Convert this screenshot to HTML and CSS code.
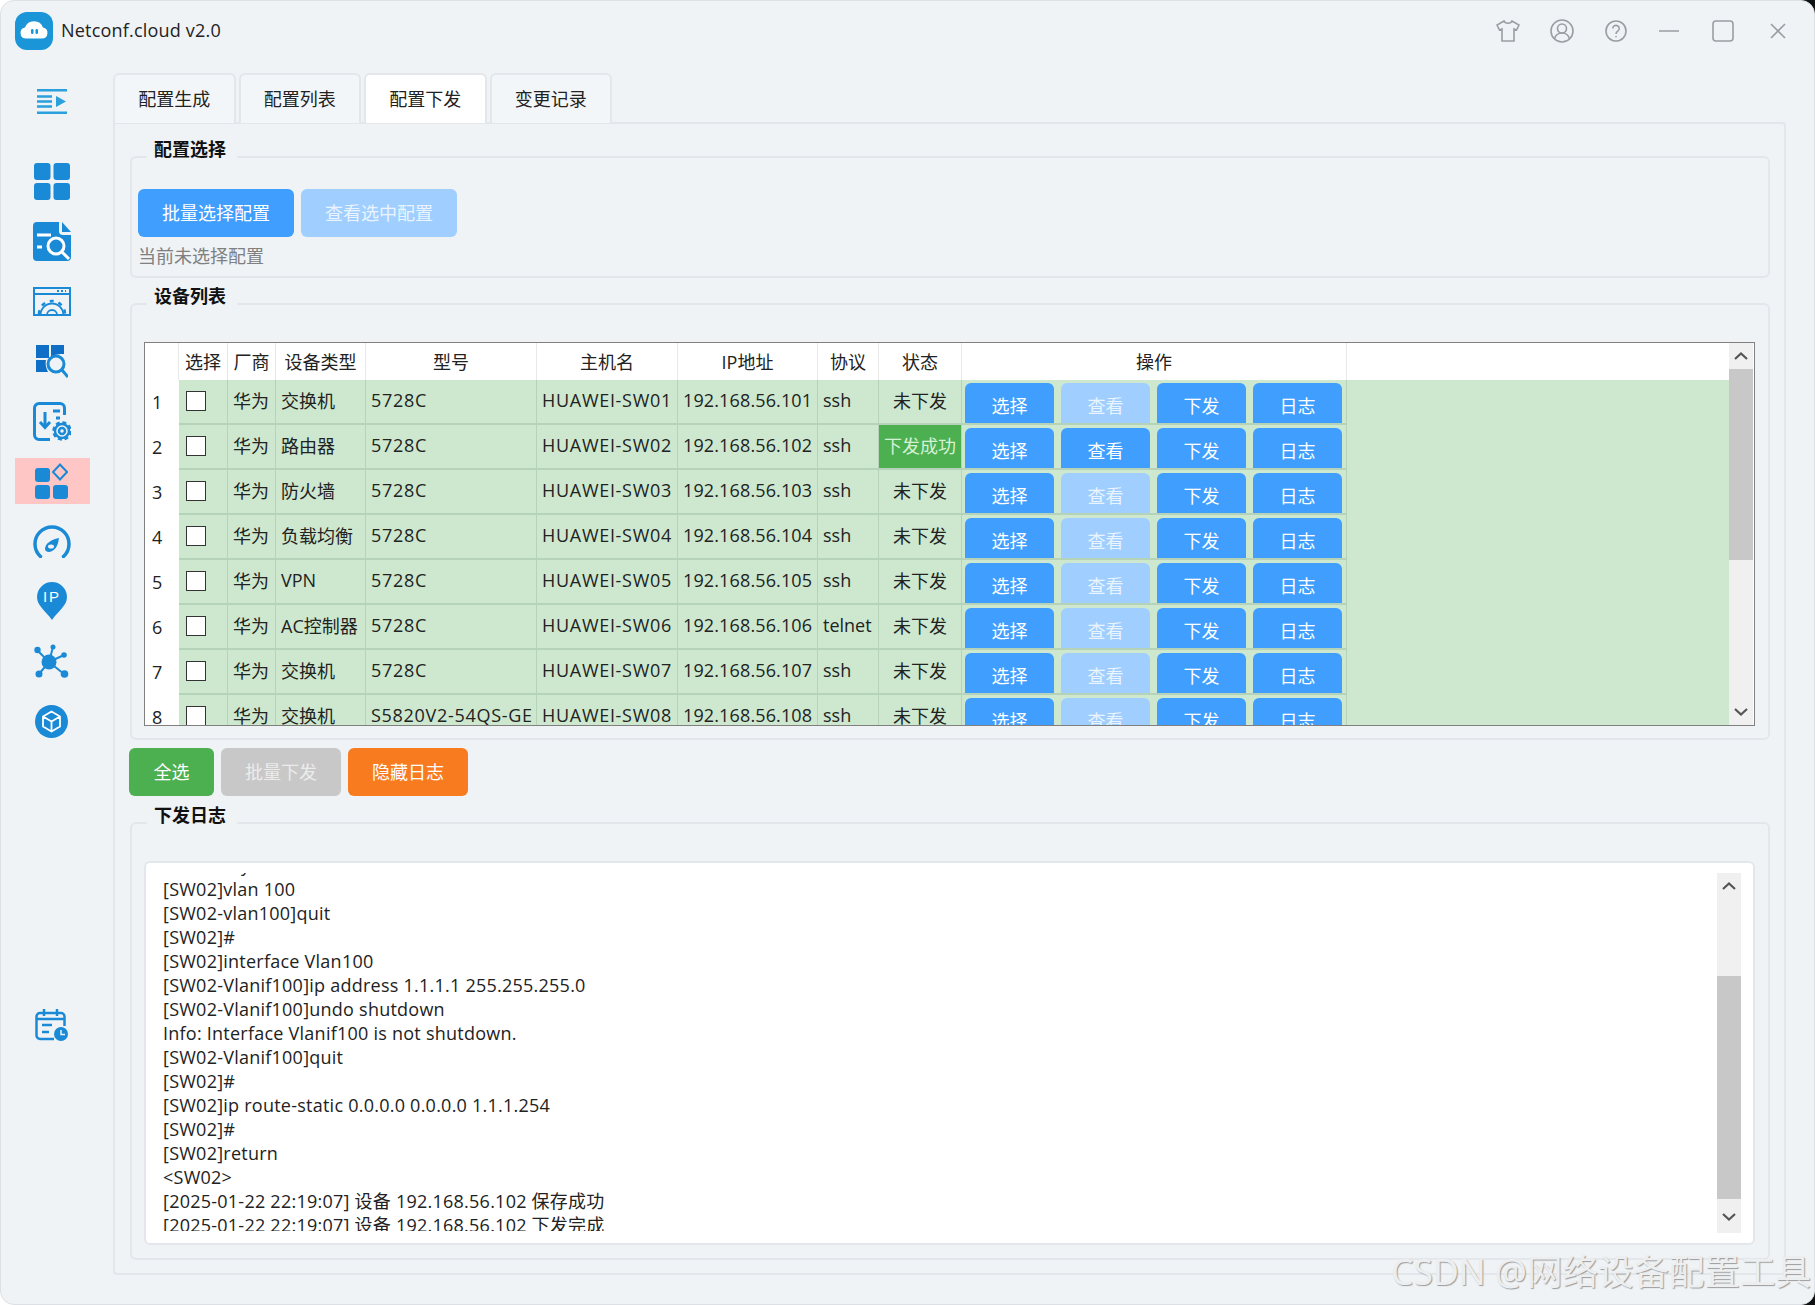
FILE: index.html
```html
<!DOCTYPE html>
<html lang="zh-CN">
<head>
<meta charset="utf-8">
<title>Netconf.cloud v2.0</title>
<link rel="stylesheet" href="styles.css">
</head>
<body>
<div class="window">
  <header class="titlebar">
    <div class="brand">
      <span class="logo">
        <svg width="38" height="38" viewBox="0 0 38 38"><rect width="38" height="38" rx="12" fill="#1a96d8"/><path d="M11 26.500a5.500 5.500 0 0 1-1-10.900a9.500 9.500 0 0 1 18 0a5.500 5.500 0 0 1-1 10.900z" fill="#fff"/><rect x="16" y="17" width="2.500" height="5" rx="1.200" fill="#1a96d8"/><rect x="20.500" y="17" width="2.500" height="5" rx="1.200" fill="#1a96d8"/></svg>
      </span>
      <span class="brand-name">Netconf.cloud v2.0</span>
    </div>
    <div class="win-tools">
      <svg class="wt wt-shirt" width="24" height="22" viewBox="0 0 24 22"><path d="M8 1L1 5l2.500 5L6 9v12h12V9l2.500 1L23 5l-7-4c-1 3-7 3-8 0z"/></svg>
      <svg class="wt wt-user" width="24" height="24" viewBox="0 0 24 24"><circle cx="12" cy="12" r="11"/><circle cx="12" cy="9.500" r="4.500"/><path d="M4.500 20c1-4 4-6 7.500-6s6.500 2 7.500 6"/></svg>
      <svg class="wt wt-help" width="22" height="22" viewBox="0 0 22 22"><circle cx="11" cy="11" r="10"/><path d="M7.800 8.500a3.200 3.200 0 1 1 5 2.700c-1.200.8-1.800 1.300-1.800 2.800"/><path d="M11 16v1.200"/></svg>
      <svg class="wt wt-min" width="20" height="4" viewBox="0 0 20 4"><path d="M0 2H20"/></svg>
      <svg class="wt wt-max" width="22" height="22" viewBox="0 0 22 22"><rect x="1" y="1" width="20" height="20" rx="3"/></svg>
      <svg class="wt wt-close" width="16" height="16" viewBox="0 0 16 16"><path d="M1 1L15 15M15 1L1 15"/></svg>
    </div>
  </header>

  <div class="body">
    <nav class="sidebar">
      <div class="nav-item nav-toggle">
        <svg width="30" height="25" viewBox="0 0 30 25"><path d="M0 1.200H30M0 7.500H15M0 12.500H15M0 17.500H15M0 23.800H30" stroke="#2aa0dc" stroke-width="2.400" fill="none"/><path d="M19 7L29 12.500L19 18z" fill="#2aa0dc"/></svg>
      </div>
      <div class="nav-list">
        <div class="nav-item">
          <svg width="36" height="37" viewBox="0 0 36 37" fill="#1b8ad6"><rect width="16.500" height="17" rx="3"/><rect x="19.500" width="16.500" height="17" rx="3"/><rect y="20" width="16.500" height="17" rx="3"/><rect x="19.500" y="20" width="16.500" height="17" rx="3"/></svg>
        </div>
        <div class="nav-item">
          <svg width="38" height="39" viewBox="0 0 38 39"><path d="M4 0H26V9a4 4 0 0 0 4 4H38V35a4 4 0 0 1-4 4H4a4 4 0 0 1-4-4V4a4 4 0 0 1 4-4z" fill="#1b8ad6"/><path d="M29 0L38 10H29z" fill="#1b8ad6"/><path d="M4 13H18M4 25H9" stroke="#fff" stroke-width="3"/><circle cx="23" cy="24" r="8" fill="none" stroke="#fff" stroke-width="3"/><path d="M29 30L36 37" stroke="#fff" stroke-width="3"/></svg>
        </div>
        <div class="nav-item">
          <svg width="38" height="29" viewBox="0 0 38 29" fill="none" stroke="#1b8ad6"><rect x="1" y="1" width="36" height="27" stroke-width="2"/><path d="M1 7H37" stroke-width="2"/><path d="M24 4H33" stroke-width="2" stroke-dasharray="2 2"/><path d="M7.500 28a11.500 11.500 0 0 1 23 0" stroke-width="1.800"/><path d="M6 27a13 13 0 0 1 26 0" stroke-width="2.500" stroke-dasharray="4 5"/><path d="M14 28a5 5 0 0 1 10 0" stroke-width="1.800"/></svg>
        </div>
        <div class="nav-item">
          <svg width="32" height="33" viewBox="0 0 32 33"><path d="M0 0H13V13H0zM15 0H28V9C24 9 19 9 15 12z" fill="#0f6fc6"/><path d="M0 15H10C9 19 10 23 12 27H0z" fill="#0f6fc6"/><circle cx="20" cy="19" r="8" fill="none" stroke="#1b8ad6" stroke-width="3"/><path d="M26 25L32 32" stroke="#1b8ad6" stroke-width="3"/></svg>
        </div>
        <div class="nav-item">
          <svg width="38" height="39" viewBox="0 0 38 39" fill="none" stroke="#1b8ad6" stroke-width="3"><path d="M17 37.500H6a4.500 4.500 0 0 1-4.500-4.500V6A4.500 4.500 0 0 1 6 1.500H27a4.500 4.500 0 0 1 4.500 4.500V13"/><path d="M12 10V25M7 20l5 5.500 5-5.500"/><path d="M20 9H27M23 16H27" /><circle cx="29" cy="29" r="3" stroke-width="2.500"/><circle cx="29" cy="29" r="7" stroke-width="2.500"/><circle cx="29" cy="29" r="8.500" stroke-width="2.500" stroke-dasharray="4 2.700"/></svg>
        </div>
        <div class="nav-item nav-active">
          <svg width="33" height="36" viewBox="0 0 33 36"><g fill="#1b8ad6"><rect y="5" width="15" height="14" rx="3"/><rect y="22" width="15" height="14" rx="3"/><rect x="18" y="22" width="15" height="14" rx="3"/></g><path d="M25 1.500L32 9L25 16.500L18 9z" fill="none" stroke="#1b8ad6" stroke-width="2"/></svg>
        </div>
        <div class="nav-item">
          <svg width="38" height="33" viewBox="0 0 38 33" fill="none"><path d="M7.500 31.500A17 17 0 1 1 30.500 31.500" stroke="#1b8ad6" stroke-width="3.500" stroke-linecap="round"/><path d="M12 24c0-5 5-9 14-11c-1 8-4 13-10 14c-2 0-4-1-4-3z" fill="#1b8ad6"/><ellipse cx="18" cy="21.500" rx="3" ry="2" fill="#f0f3f6"/></svg>
        </div>
        <div class="nav-item">
          <svg width="30" height="38" viewBox="0 0 30 38"><path d="M15 0a15 15 0 0 1 15 15c0 9-9 14-15 23c-6-9-15-14-15-23a15 15 0 0 1 15-15z" fill="#1b8ad6"/><text x="15" y="20" text-anchor="middle" class="pin-text">IP</text></svg>
        </div>
        <div class="nav-item">
          <svg width="35" height="35" viewBox="0 0 35 35"><g stroke="#1b8ad6" stroke-width="2"><path d="M15 18L19 3M15 18L30 11M15 18L30 30M15 18L5 30M15 18L3 6"/></g><g fill="#1b8ad6"><circle cx="15" cy="18" r="7.500"/><circle cx="19" cy="3" r="2.500"/><circle cx="30" cy="11" r="2.800"/><circle cx="30.500" cy="30" r="3.800"/><circle cx="5" cy="30" r="3.500"/><circle cx="3.500" cy="6" r="3.200"/></g></svg>
        </div>
        <div class="nav-item">
          <svg width="33" height="33" viewBox="0 0 33 33"><circle cx="16.500" cy="16.500" r="16.500" fill="#1b8ad6"/><path d="M16.500 6.500L25 11.500V21.500L16.500 26.500L8 21.500V11.500zM8 11.500L16.500 16.500L25 11.500M16.500 16.500V26.500" fill="none" stroke="#fff" stroke-width="1.800" stroke-linejoin="round"/></svg>
        </div>
      </div>
      <div class="nav-item nav-bottom">
        <svg width="33" height="32" viewBox="0 0 33 32" fill="none" stroke="#1b8ad6" stroke-width="2.500"><path d="M19 30H5a3.500 3.500 0 0 1-3.500-3.500V7.500A3.500 3.500 0 0 1 5 4H26a3.500 3.500 0 0 1 3.500 3.500V17"/><path d="M9 0V7M22 0V7M1.500 10H29.500M7 16H17M7 23H14"/><circle cx="26" cy="25" r="7" fill="#1b8ad6" stroke="none"/><path d="M26 21V25.500H30" stroke="#f0f3f6" stroke-width="1.500"/></svg>
      </div>
    </nav>

    <main class="main">
      <div class="tabs">
        <div class="tab">配置生成</div>
        <div class="tab">配置列表</div>
        <div class="tab tab-active">配置下发</div>
        <div class="tab">变更记录</div>
      </div>
      <section class="pane">
        <div class="group">
          <div class="group-title">配置选择</div>
          <div class="group-body body-select">
            <div class="btn-row">
              <button class="btn btn-primary btn-wide">批量选择配置</button>
              <button class="btn btn-light btn-wide">查看选中配置</button>
            </div>
            <div class="hint">当前未选择配置</div>
          </div>
        </div>

        <div class="group group-list">
          <div class="group-title">设备列表</div>
          <div class="group-body body-list">
            <div class="table-wrap">
              <div class="table-scroll">
                <table class="devices">
                  <colgroup>
                    <col class="c-num"><col class="c-sel"><col class="c-ven"><col class="c-type"><col class="c-model"><col class="c-host"><col class="c-ip"><col class="c-proto"><col class="c-state"><col class="c-ops"><col class="c-rest">
                  </colgroup>
                  <thead>
                    <tr><th></th><th>选择</th><th>厂商</th><th>设备类型</th><th>型号</th><th>主机名</th><th>IP地址</th><th>协议</th><th>状态</th><th>操作</th><th class="th-rest"></th></tr>
                  </thead>
                  <tbody>
                    <tr><td class="num">1</td><td><span class="check"></span></td><td>华为</td><td>交换机</td><td class="wide">5728C</td><td class="wide">HUAWEI-SW01</td><td class="ip">192.168.56.101</td><td>ssh</td><td class="state">未下发</td><td class="ops"><div class="ops-in"><button class="btn btn-primary btn-op">选择</button><button class="btn btn-light btn-op">查看</button><button class="btn btn-primary btn-op">下发</button><button class="btn btn-primary btn-op">日志</button></div></td><td class="rest"></td></tr>
                    <tr><td class="num">2</td><td><span class="check"></span></td><td>华为</td><td>路由器</td><td class="wide">5728C</td><td class="wide">HUAWEI-SW02</td><td class="ip">192.168.56.102</td><td>ssh</td><td class="state state-ok">下发成功</td><td class="ops"><div class="ops-in"><button class="btn btn-primary btn-op">选择</button><button class="btn btn-primary btn-op">查看</button><button class="btn btn-primary btn-op">下发</button><button class="btn btn-primary btn-op">日志</button></div></td><td class="rest"></td></tr>
                    <tr><td class="num">3</td><td><span class="check"></span></td><td>华为</td><td>防火墙</td><td class="wide">5728C</td><td class="wide">HUAWEI-SW03</td><td class="ip">192.168.56.103</td><td>ssh</td><td class="state">未下发</td><td class="ops"><div class="ops-in"><button class="btn btn-primary btn-op">选择</button><button class="btn btn-light btn-op">查看</button><button class="btn btn-primary btn-op">下发</button><button class="btn btn-primary btn-op">日志</button></div></td><td class="rest"></td></tr>
                    <tr><td class="num">4</td><td><span class="check"></span></td><td>华为</td><td>负载均衡</td><td class="wide">5728C</td><td class="wide">HUAWEI-SW04</td><td class="ip">192.168.56.104</td><td>ssh</td><td class="state">未下发</td><td class="ops"><div class="ops-in"><button class="btn btn-primary btn-op">选择</button><button class="btn btn-light btn-op">查看</button><button class="btn btn-primary btn-op">下发</button><button class="btn btn-primary btn-op">日志</button></div></td><td class="rest"></td></tr>
                    <tr><td class="num">5</td><td><span class="check"></span></td><td>华为</td><td>VPN</td><td class="wide">5728C</td><td class="wide">HUAWEI-SW05</td><td class="ip">192.168.56.105</td><td>ssh</td><td class="state">未下发</td><td class="ops"><div class="ops-in"><button class="btn btn-primary btn-op">选择</button><button class="btn btn-light btn-op">查看</button><button class="btn btn-primary btn-op">下发</button><button class="btn btn-primary btn-op">日志</button></div></td><td class="rest"></td></tr>
                    <tr><td class="num">6</td><td><span class="check"></span></td><td>华为</td><td>AC控制器</td><td class="wide">5728C</td><td class="wide">HUAWEI-SW06</td><td class="ip">192.168.56.106</td><td>telnet</td><td class="state">未下发</td><td class="ops"><div class="ops-in"><button class="btn btn-primary btn-op">选择</button><button class="btn btn-light btn-op">查看</button><button class="btn btn-primary btn-op">下发</button><button class="btn btn-primary btn-op">日志</button></div></td><td class="rest"></td></tr>
                    <tr><td class="num">7</td><td><span class="check"></span></td><td>华为</td><td>交换机</td><td class="wide">5728C</td><td class="wide">HUAWEI-SW07</td><td class="ip">192.168.56.107</td><td>ssh</td><td class="state">未下发</td><td class="ops"><div class="ops-in"><button class="btn btn-primary btn-op">选择</button><button class="btn btn-light btn-op">查看</button><button class="btn btn-primary btn-op">下发</button><button class="btn btn-primary btn-op">日志</button></div></td><td class="rest"></td></tr>
                    <tr><td class="num">8</td><td><span class="check"></span></td><td>华为</td><td>交换机</td><td class="wide">S5820V2-54QS-GE</td><td class="wide">HUAWEI-SW08</td><td class="ip">192.168.56.108</td><td>ssh</td><td class="state">未下发</td><td class="ops"><div class="ops-in"><button class="btn btn-primary btn-op">选择</button><button class="btn btn-light btn-op">查看</button><button class="btn btn-primary btn-op">下发</button><button class="btn btn-primary btn-op">日志</button></div></td><td class="rest"></td></tr>
                  </tbody>
                </table>
              </div>
              <div class="vbar vbar-table">
                <div class="arrow"><svg width="14" height="8" viewBox="0 0 14 8"><path d="M1 7L7 1.500L13 7" fill="none" stroke="#555" stroke-width="2.200"/></svg></div>
                <div class="thumb thumb-table"></div>
                <div class="arrow"><svg width="14" height="8" viewBox="0 0 14 8"><path d="M1 1L7 6.500L13 1" fill="none" stroke="#555" stroke-width="2.200"/></svg></div>
              </div>
            </div>
          </div>
        </div>

        <div class="actions">
          <button class="btn btn-green btn-all">全选</button>
          <button class="btn btn-gray btn-act">批量下发</button>
          <button class="btn btn-orange btn-act">隐藏日志</button>
        </div>

        <div class="group group-log">
          <div class="group-title">下发日志</div>
          <div class="group-body body-list body-log">
            <div class="log-box">
              <div class="log-clip">
<pre class="log-text">&lt;SW02&gt;system-view
[SW02]vlan 100
[SW02-vlan100]quit
[SW02]#
[SW02]interface Vlan100
[SW02-Vlanif100]ip address 1.1.1.1 255.255.255.0
[SW02-Vlanif100]undo shutdown
Info: Interface Vlanif100 is not shutdown.
[SW02-Vlanif100]quit
[SW02]#
[SW02]ip route-static 0.0.0.0 0.0.0.0 1.1.1.254
[SW02]#
[SW02]return
&lt;SW02&gt;
[2025-01-22 22:19:07] 设备 192.168.56.102 保存成功
[2025-01-22 22:19:07] 设备 192.168.56.102 下发完成</pre>
              </div>
              <div class="vbar">
                <div class="arrow"><svg width="14" height="8" viewBox="0 0 14 8"><path d="M1 7L7 1.500L13 7" fill="none" stroke="#555" stroke-width="2.200"/></svg></div>
                <div class="thumb thumb-log"></div>
                <div class="arrow arrow-log"><svg width="14" height="8" viewBox="0 0 14 8"><path d="M1 1L7 6.500L13 1" fill="none" stroke="#555" stroke-width="2.200"/></svg></div>
              </div>
            </div>
          </div>
        </div>
      </section>
    </main>
  </div>
  <div class="watermark">CSDN @网络设备配置工具</div>
</div>
</body>
</html>
```

FILE: styles.css
```css
* { box-sizing: border-box; }
html { background: linear-gradient(90deg, #fff 50%, #111 50%); height: 100%; }
body { margin: 0; height: 1305px; overflow: hidden; font-family: "Open Sans", "Noto Sans CJK SC", sans-serif; font-size: 18px; color: #222; }

.window { position: relative; width: 1815px; height: 1305px; background: #eff3f6; border: 1px solid #dde1e5; border-radius: 14px; overflow: hidden; display: flex; flex-direction: column; }

.titlebar { height: 59px; flex: none; display: flex; align-items: center; justify-content: space-between; padding: 0 28px 0 14px; }
.brand { display: flex; align-items: center; gap: 8px; }
.logo { display: block; width: 38px; height: 38px; }
.logo svg { display: block; }
.brand-name { font-size: 18px; color: #222; letter-spacing: .2px; padding-bottom: 2px; }
.win-tools { display: flex; align-items: center; }
.wt { fill: none; stroke: #9a9ea3; stroke-width: 1.6; display: block; }
.wt-user { margin-left: 30px; }
.wt-help { margin-left: 31px; }
.wt-min { margin-left: 32px; }
.wt-max { margin-left: 33px; }
.wt-close { margin-left: 36px; }

.body { flex: 1; display: flex; min-height: 0; }

.sidebar { width: 112px; flex: none; display: flex; flex-direction: column; padding-top: 11px; padding-left: 14px; }
.nav-item { width: 75px; height: 60px; display: flex; align-items: center; justify-content: center; padding-right: 2px; }
.nav-list { margin-top: 20px; display: flex; flex-direction: column; }
.nav-active { background: linear-gradient(#ffc6c6, #ffc6c6) center / 75px 46px no-repeat; }
.nav-bottom { margin-top: 244px; }
.pin-text { font-family: "Liberation Sans", sans-serif; font-size: 15px; fill: #fff; letter-spacing: 2px; }

.main { flex: none; width: 1673px; padding-top: 13px; }
.tabs { display: flex; gap: 3px; height: 49px; }
.tab { width: 122.500px; height: 50px; padding-bottom: 3px; background: #f3f6f8; border: 2px solid #e3e7eb; border-bottom: none; border-radius: 6px 6px 0 0; display: flex; align-items: center; justify-content: center; position: relative; z-index: 1; }
.tab-active { background: #fff; }

.pane { border: 2px solid #e3e7eb; border-radius: 0 4px 4px 4px; padding: 32px 14px 13px 15px; }

.group { border: 2px solid #e3e7eb; border-radius: 6px; }
.group-title { width: fit-content; height: 26px; line-height: 24px; margin: -21px 0 0 15px; padding: 0 11px 0 7px; background: #eff3f6; font-weight: 700; color: #111; }
.group-list { margin-top: 25px; }
.group-log { margin-top: 26px; }

.group-body { padding: 0 13px 12px 12px; }
.body-select { padding: 26px 6px 7px; }
.body-list { padding-top: 32px; }
.body-log { padding-top: 32px; padding-bottom: 13px; }

.btn { display: block; border: none; padding: 0 0 2px; margin: 0; font-family: inherit; font-size: 18px; color: #fff; border-radius: 6px; text-align: center; }
.btn-row { display: flex; gap: 7px; }
.btn-wide { width: 156px; height: 48px; }
.btn-primary { background: #409eff; }
.btn-light { background: #a0cfff; color: #eaf4ff; }
.btn-green { background: #4caf50; }
.btn-gray { background: #c8c8c8; color: #ececec; }
.btn-orange { background: #f87b20; }
.hint { margin-top: 6px; height: 26px; line-height: 26px; color: #808080; }

.table-wrap { display: flex; height: 384px; border: 1px solid #808080; background: #fff; overflow: hidden; }
.table-scroll { flex: 1; min-width: 0; overflow: hidden; }
.devices { width: 1584px; table-layout: fixed; border-collapse: separate; border-spacing: 0; }
.c-num { width: 34px; } .c-sel { width: 49px; } .c-ven { width: 48px; } .c-type { width: 90px; } .c-model { width: 171px; } .c-host { width: 141px; } .c-ip { width: 140px; } .c-proto { width: 61px; } .c-state { width: 83px; } .c-ops { width: 385px; } .c-rest { width: 382px; }
.devices th { height: 37px; padding: 0 0 2px; font-weight: 400; background: #fff; border-right: 1px solid #e8e8e8; text-align: center; white-space: nowrap; }
.devices th.th-rest { border-right: none; }
.devices td { height: 45px; padding: 0 0 4px 5px; background: #cde8cf; border-right: 1px solid #b5d3b9; border-bottom: 2px solid #b5d3b9; white-space: nowrap; overflow: hidden; }
.devices td.num { background: #fff; border: none; padding: 0 0 2px 7px; }
.devices td.rest { border-right: none; border-bottom: none; padding: 0; }
.devices td.state { padding: 0 0 4px; text-align: center; }
.devices td.state-ok { background: #4caf50; color: #d6f2d6; }
.devices td.wide { letter-spacing: .7px; }
.devices td.ip { letter-spacing: .13px; }
.check { display: block; width: 20px; height: 20px; margin: 2px 0 0 2px; background: #fff; border: 1px solid #333; }
.devices td.ops { padding: 0 0 0 3px; vertical-align: top; }
.ops-in { display: flex; gap: 7px; height: 40px; margin-top: 3px; overflow: hidden; }
.btn-op { width: 89px; height: 48px; flex: none; padding-bottom: 4px; }

.vbar { width: 24px; flex: none; display: flex; flex-direction: column; background: #f0f0f0; }
.vbar-table { margin-right: 1px; }
.arrow { height: 26px; flex: none; display: flex; align-items: center; justify-content: center; }
.arrow svg { display: block; }
.thumb { background: #c8c8c8; flex: none; }
.thumb-table { height: 191px; margin-bottom: auto; }
.thumb-log { height: 223px; margin-top: 77px; margin-bottom: auto; }
.arrow-log { height: 33px; }

.actions { display: flex; gap: 7px; margin: 8px 0 0 -1px; }
.btn-all { width: 85px; height: 48px; }
.btn-act { width: 120px; height: 48px; }

.log-box { display: flex; height: 384px; padding: 10px 12px 10px 17px; background: #fff; border: 2px solid #e3e7eb; border-radius: 6px; }
.log-clip { flex: 1; min-width: 0; height: 358px; overflow: hidden; }
.log-text { margin: -20px 0 0; font-family: inherit; font-size: 18px; line-height: 24px; letter-spacing: .24px; color: #222; white-space: pre; }

.watermark { position: absolute; right: 3px; bottom: 11px; font-family: "Noto Sans", "Noto Sans CJK SC", sans-serif; font-size: 35.500px; line-height: 44px; color: #eceef0; text-shadow: 1px 1px 1px #9c9c9c; white-space: nowrap; }
```
